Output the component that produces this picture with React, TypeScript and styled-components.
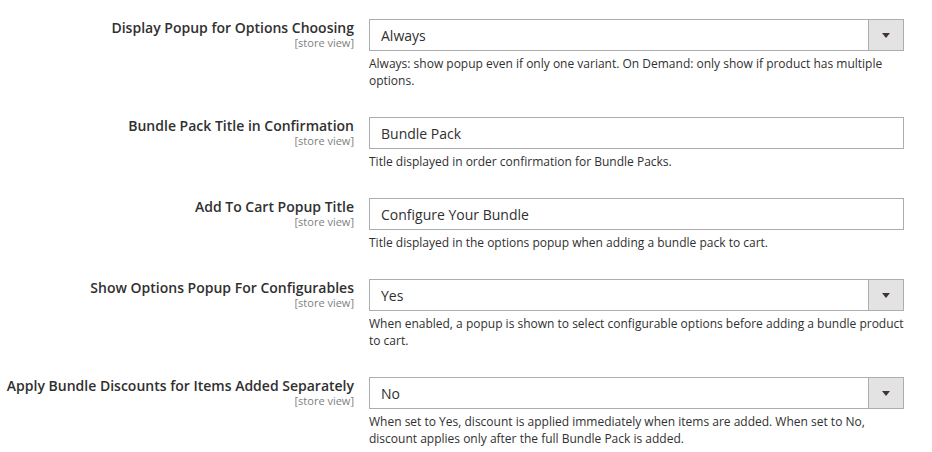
import React, { FunctionComponent } from "react";
import styled, { createGlobalStyle } from "styled-components";

type Field = {
    label: string;
    kind: "select" | "text";
    value: string;
    note: string;
};

const fields: Array<Field> = [
    {
        label: "Display Popup for Options Choosing",
        kind: "select",
        value: "Always",
        note: "Always: show popup even if only one variant. On Demand: only show if product has multiple options.",
    },
    {
        label: "Bundle Pack Title in Confirmation",
        kind: "text",
        value: "Bundle Pack",
        note: "Title displayed in order confirmation for Bundle Packs.",
    },
    {
        label: "Add To Cart Popup Title",
        kind: "text",
        value: "Configure Your Bundle",
        note: "Title displayed in the options popup when adding a bundle pack to cart.",
    },
    {
        label: "Show Options Popup For Configurables",
        kind: "select",
        value: "Yes",
        note: "When enabled, a popup is shown to select configurable options before adding a bundle product to cart.",
    },
    {
        label: "Apply Bundle Discounts for Items Added Separately",
        kind: "select",
        value: "No",
        note: "When set to Yes, discount is applied immediately when items are added. When set to No, discount applies only after the full Bundle Pack is added.",
    },
];

const App: FunctionComponent = () => {
    return (
        <>
            <GlobalStyle />
            <Root>
                {fields.map((field) => (
                    <Row key={field.label}>
                        <Label>
                            <span className="title">{field.label}</span>
                            <span className="scope">[store view]</span>
                        </Label>
                        <Control>
                            {field.kind === "select" ? (
                                <SelectBox>
                                    <span className="value">{field.value}</span>
                                    <Arrow>
                                        <i />
                                    </Arrow>
                                </SelectBox>
                            ) : (
                                <TextInput readOnly value={field.value} />
                            )}
                            <Note>{field.note}</Note>
                        </Control>
                    </Row>
                ))}
            </Root>
        </>
    );
};

const GlobalStyle = createGlobalStyle`
    body {
        margin: 0;
        background: #ffffff;
        font-family: "Open Sans", "Liberation Sans", sans-serif;
        color: #303030;
    }
`;

const Root = styled.div`
    padding-top: 19px;
`;

const Row = styled.div`
    display: grid;
    grid-template-columns: 354px 535px;
    column-gap: 15px;
    margin-bottom: 28px;
    &:last-child {
        margin-bottom: 0;
    }
`;

const Label = styled.label`
    display: flex;
    flex-direction: column;
    align-items: flex-end;
    text-align: right;
    .title {
        font-size: 14px;
        font-weight: 600;
        line-height: 18px;
        color: #303030;
        white-space: nowrap;
    }
    .scope {
        font-size: 11px;
        line-height: 11px;
        color: #808080;
    }
`;

const Control = styled.div`
    display: flex;
    flex-direction: column;
`;

const SelectBox = styled.div`
    box-sizing: border-box;
    display: flex;
    align-items: stretch;
    height: 32px;
    border: 1px solid #adadad;
    background: #ffffff;
    .value {
        flex: 1;
        padding-left: 11px;
        font-size: 14px;
        line-height: 31px;
        color: #303030;
    }
`;

const Arrow = styled.div`
    width: 34px;
    display: flex;
    align-items: center;
    justify-content: center;
    background: #e3e3e3;
    border-left: 1px solid #adadad;
    i {
        width: 0;
        height: 0;
        border-left: 4px solid transparent;
        border-right: 4px solid transparent;
        border-top: 5px solid #41362f;
    }
`;

const TextInput = styled.input`
    box-sizing: border-box;
    height: 32px;
    width: 100%;
    margin: 0;
    border: 1px solid #adadad;
    border-radius: 0;
    padding: 1px 11px 0;
    font-family: "Open Sans", "Liberation Sans", sans-serif;
    font-size: 14px;
    color: #303030;
    background: #ffffff;
    outline: none;
`;

const Note = styled.p`
    margin: 4px 0 0;
    font-size: 12px;
    line-height: 17px;
    color: #303030;
`;

export default App;
